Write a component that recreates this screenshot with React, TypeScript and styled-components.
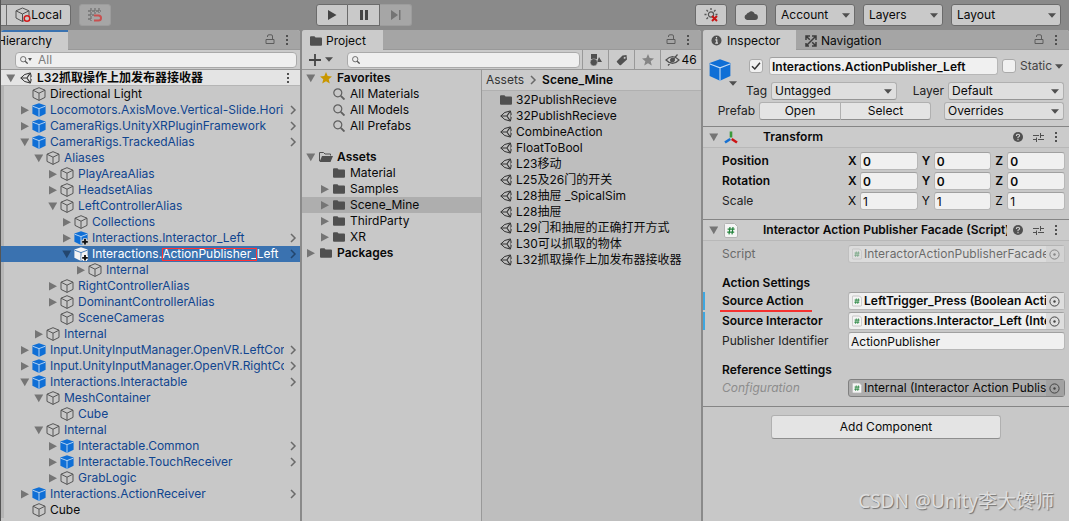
import React from "react";
import styled, { createGlobalStyle, css } from "styled-components";

const GlobalStyle = createGlobalStyle`
  *, *::before, *::after { box-sizing: border-box; }
  body { margin: 0; background: #8a8a8a; }
  body, button, input, select {
    font-family: Inter, "Noto Sans CJK SC", sans-serif;
    font-size: 12px;
    line-height: 16px;
    color: #090909;
  }
  button { padding: 0; border: 0; background: none; }
  ul { list-style: none; margin: 0; padding: 0; }
  svg { display: block; flex: none; }
`;

/* ---------- icons ---------- */

const Cube = ({ kind = "outline", size = 14, plus = false }: { kind?: string; size?: number; plus?: boolean }) => {
  const solid = kind !== "outline";
  const fill = kind === "white" ? "#f4f4f4" : "#0f6fd6";
  const seam = kind === "white" ? "#3a72b0" : "#c4dcf5";
  return (
    <svg width={size} height={size} viewBox="0 0 14 14" fill="none">
      {solid ? (
        <>
          <path d="M7 .2 13.6 2.6V10.8L7 13.9.4 10.8V2.6Z" fill={fill} />
          <path d="M.6 3.2 7 5.6 13.4 3.2M7 5.6V13.8" stroke={seam} strokeWidth={size > 14 ? 0.7 : 0.9} />
        </>
      ) : (
        <path d="M7 .7 13 3.2V10.4L7 13.4 1 10.4V3.2ZM1 3.2 7 6.2 13 3.2M7 6.2V13.4" stroke="#555" strokeWidth="1" strokeLinejoin="round" />
      )}
      {plus && (
        <>
          <path d="M11 7.2V14M7.4 10.7H14" stroke={kind === "white" ? "#f4f4f4" : "#c8c8c8"} strokeWidth="4" />
          <path d="M11 8V13.6M8.2 10.8H13.8" stroke="#111" strokeWidth="1.8" />
        </>
      )}
    </svg>
  );
};

const Triangle = ({ open, color = "#757575" }: { open?: boolean; color?: string }) => (
  <svg width="10" height="10" viewBox="0 0 10 10" fill={color}>
    <path d={open ? "M.3 1.5H9.2L4.8 9.2Z" : "M1 1 9 5.2 1 9.4Z"} />
  </svg>
);

const Caret = () => (
  <svg width="8" height="5" viewBox="0 0 8 5" fill="#4f4f4f">
    <path d="M0 .3H8L4 4.7Z" />
  </svg>
);

const Kebab = () => (
  <svg width="4" height="12" viewBox="0 0 4 12" fill="#505050">
    <path d="M1 1h2v2H1zM1 5h2v2H1zM1 9h2v2H1z" />
  </svg>
);

const Lock = () => (
  <svg width="10" height="11" viewBox="0 0 10 11" fill="none" stroke="#5c5c5c">
    <path d="M1 5.5H9V9.5H1ZM2.5 3V2Q2.5 .8 4 .8H6Q7.5 .8 7.5 2V5.5" />
  </svg>
);

const Chevron = ({ color = "#6a6a6a" }: { color?: string }) => (
  <svg width="8" height="10" viewBox="0 0 8 10" fill="none" stroke={color} strokeWidth="1.5">
    <path d="M2 1 6 5 2 9" />
  </svg>
);

const Magnifier = ({ size = 8, color = "#4f4f4f" }: { size?: number; color?: string }) => (
  <svg width={size} height={size} viewBox="0 0 12 12" fill="none" stroke={color}>
    <circle cx="4.8" cy="4.8" r="4" strokeWidth="1.2" />
    <path d="M7.8 7.8 11.5 11.5" strokeWidth="1.9" />
  </svg>
);

const Folder = ({ open }: { open?: boolean }) =>
  open ? (
    <svg width="14" height="12" viewBox="0 0 14 12" fill="#505050">
      <path d="M.5 10V1.5H4.5L6 3H11.5V4.5" fill="none" stroke="#505050" />
      <path d="M3 5H14L11.5 11H.5Z" />
    </svg>
  ) : (
    <svg width="12" height="12" viewBox="0 0 12 12" fill="#505050">
      <path d="M0 2.2Q0 1.2 1 1.2H4.4L5.6 2.6H11Q12 2.6 12 3.6V9.8Q12 10.8 11 10.8H1Q0 10.8 0 9.8Z" />
    </svg>
  );

const UnityMark = () => (
  <svg width="12" height="12" viewBox="0 0 12 12" fill="none" stroke="#333" strokeWidth="1">
    <path d="M4.6 2.6.8 6 4.6 9.4M4.4 2.6 10.4.9 11.3 4.8M11.3 7.2 10.4 11.1 4.4 9.4" />
    <path d="M.8 6H6.9L9.9 1.6M6.9 6 9.9 10.4" strokeWidth="1.1" />
    <path d="M10.6 3.6V8.4" stroke="#666" strokeWidth=".8" />
  </svg>
);

const Star = ({ color, size = 12 }: { color: string; size?: number }) => (
  <svg width={size} height={size} viewBox="0 0 12 12" fill={color}>
    <path d="M6 0 7.7 4.1 12 4.5 8.7 7.3 9.8 11.6 6 9.3 2.2 11.6 3.3 7.3 0 4.5 4.3 4.1Z" />
  </svg>
);

const Help = () => (
  <svg width="10" height="10" viewBox="0 0 10 10" fill="none">
    <circle cx="5" cy="5" r="5" fill="#505050" />
    <path d="M3.4 3.9Q3.4 2.3 5 2.3T6.6 3.8Q6.6 4.6 5 5.3V6.2M5 7V8.2" stroke="#d0d0d0" strokeWidth="1.1" />
  </svg>
);

const Sliders = () => (
  <svg width="11" height="11" viewBox="0 0 11 11" fill="none" stroke="#505050">
    <path d="M0 3.5H6M8 3.5H11M7.5 1V6M0 7.5H3M5 7.5H11M3.5 5.5V10" />
  </svg>
);

const ScriptMark = ({ big }: { big?: boolean }) => (
  <svg width={big ? 14 : 10} height={big ? 15 : 12} viewBox="0 0 14 15" fill="none">
    <path d="M1.5.5H10.5L13.5 3.5V13Q13.5 14.5 12 14.5H2Q.5 14.5 .5 13V1.5Q.5.5 1.5.5Z" fill="#f5f5f5" stroke="#b4b4b4" />
    <path d="M6 4 5 11.4M9 4 8 11.4M3.6 6.2H10.6M3.2 9.2H10.2" stroke="#21823a" strokeWidth="1.2" />
  </svg>
);

const Picker = () => (
  <svg width="11" height="11" viewBox="0 0 11 11" fill="none">
    <circle cx="5.5" cy="5.5" r="4.6" stroke="#444" />
    <circle cx="5.5" cy="5.5" r="1.2" fill="#444" />
  </svg>
);

const Axes = () => (
  <svg width="14" height="13" viewBox="0 0 14 13" fill="none" strokeWidth="2.6">
    <path d="M7 .5V6.6" stroke="#3b9a3b" />
    <path d="M1 11.5 6.3 8" stroke="#1670d2" />
    <path d="M7.7 8 13 11.5" stroke="#cc1414" />
  </svg>
);

/* ---------- shared parts ---------- */

const Editor = styled.div`
  min-height: 100vh;
  display: flex;
  flex-direction: column;
  border-left: 1px solid #555;
  position: relative;
  overflow: hidden;
`;

const Toolbar = styled.header`
  height: 30px;
  display: flex;
  align-items: center;
  padding-right: 8px;
`;

const ToolGroup = styled.div<{ $gap?: number; $basis?: string; $end?: boolean }>`
  display: flex;
  gap: ${(p) => p.$gap ?? 0}px;
  flex: ${(p) => (p.$end ? "1" : `0 0 ${p.$basis ?? "auto"}`)};
  justify-content: ${(p) => (p.$end ? "flex-end" : "flex-start")};
`;

const ToolButton = styled.button<{ $w: number; $off?: boolean; $side?: "left" | "right" | "mid" }>`
  width: ${(p) => p.$w}px;
  height: 22px;
  display: flex;
  align-items: center;
  justify-content: center;
  background: ${(p) => (p.$off ? "#a6a6a6" : "#c9c9c9")};
  border: 1px solid ${(p) => (p.$off ? "#9c9c9c" : "#6b6b6b")};
  border-radius: ${(p) => (p.$side === "left" ? "3px 0 0 3px" : p.$side === "right" ? "0 3px 3px 0" : p.$side === "mid" ? "0" : "3px")};
  ${(p) => (p.$side === "right" || p.$side === "mid") && "border-left-width: 0;"}
`;

const SelectBox = styled.span<{ $w?: number; $tool?: boolean }>`
  position: relative;
  display: flex;
  align-items: center;
  flex: ${(p) => (p.$w ? `0 0 ${p.$w}px` : "1")};
  min-width: 0;
  height: ${(p) => (p.$tool ? 22 : 18)}px;
  select {
    appearance: none;
    width: 100%;
    height: 100%;
    margin: 0;
    padding: 0 16px 0 ${(p) => (p.$tool ? 5 : 3)}px;
    background: ${(p) => (p.$tool ? "#c9c9c9" : "#dfdfdf")};
    border: 1px solid ${(p) => (p.$tool ? "#6b6b6b" : "#b0b0b0")};
    border-bottom-color: ${(p) => (p.$tool ? "#6b6b6b" : "#969696")};
    border-radius: 3px;
  }
  svg { position: absolute; right: 5px; pointer-events: none; }
`;

const Dropdown = ({ value, w, tool, label }: { value: string; w?: number; tool?: boolean; label: string }) => (
  <SelectBox $w={w} $tool={tool}>
    <select aria-label={label} defaultValue={value}>
      <option>{value}</option>
    </select>
    <Caret />
  </SelectBox>
);

const Panels = styled.main`
  flex: 1;
  display: grid;
  grid-template-columns: minmax(0, 299fr) minmax(0, 399fr) minmax(0, 366fr);
  column-gap: 2px;
`;

const Panel = styled.section`
  background: #c8c8c8;
  border-radius: 3px 3px 0 0;
  display: flex;
  flex-direction: column;
  overflow: hidden;
`;

const TabBar = styled.div`
  height: 20px;
  display: flex;
  align-items: stretch;
  background: #a5a5a5;
`;

const Tab = styled.button<{ $active?: boolean; $focus?: boolean; $w: number; $pad: number }>`
  width: ${(p) => p.$w}px;
  display: flex;
  align-items: center;
  gap: 4px;
  padding-left: ${(p) => p.$pad}px;
  background: ${(p) => (p.$active ? "#cbcbcb" : "transparent")};
  border-top: 2px solid ${(p) => (p.$focus ? "#3a72b0" : "transparent")};
  border-bottom: 1px solid ${(p) => (p.$active ? "#cbcbcb" : "#999")};
`;

const TabTools = styled.div`
  flex: 1;
  display: flex;
  align-items: center;
  justify-content: flex-end;
  gap: 10px;
  padding-right: 11px;
  border-bottom: 1px solid #999;
`;

const ClippedLabel = styled.span`
  text-indent: -4px;
`;

const PanelBar = styled.div`
  height: 20px;
  display: flex;
  align-items: center;
  background: #cbcbcb;
  border-bottom: 1px solid #999;
`;

const SearchBox = styled.label`
  flex: 1;
  height: 16px;
  display: flex;
  align-items: center;
  min-width: 0;
  padding-left: 4px;
  background: #efefef;
  border: 1px solid #aaa;
  border-radius: 4px;
  input {
    flex: 1;
    min-width: 0;
    height: 14px;
    padding: 0;
    border: 0;
    background: none;
    &::placeholder { color: #7d7d7d; opacity: 1; }
  }
`;

/* ---------- trees ---------- */

const TreeRow = styled.li<{ $depth: number; $base: number; $selected?: string; $strip?: boolean }>`
  height: 16px;
  display: flex;
  align-items: center;
  padding-left: ${(p) => p.$base + p.$depth * 14}px;
  background: ${(p) => p.$selected ?? "transparent"};
  ${(p) =>
    p.$strip &&
    css`
      box-shadow: inset 3px 0 #b5b5b5;
    `}
`;

const Fold = styled.button`
  flex: 0 0 14px;
  height: 16px;
  display: flex;
  align-items: center;
  padding-left: 2px;
`;

const Glyph = styled.span<{ $w?: number }>`
  flex: 0 0 ${(p) => p.$w ?? 14}px;
  display: flex;
  align-items: center;
  justify-content: center;
  margin-right: 4px;
`;

const SceneGlyph = styled(Glyph)`
  margin-right: 3px;
`;

const Name = styled.span<{ $color?: string; $bold?: boolean }>`
  flex: 1;
  min-width: 0;
  overflow: hidden;
  white-space: nowrap;
  color: ${(p) => p.$color ?? "#090909"};
  font-weight: ${(p) => (p.$bold ? 600 : 400)};
`;

const RowEnd = styled.span`
  flex: 0 0 16px;
  display: flex;
  align-items: center;
  padding-left: 5px;
`;

const SceneRow = styled.div`
  height: 16px;
  display: flex;
  align-items: center;
  padding-left: 3px;
  background: #e4e4e4;
  border-bottom: 1px solid #b5b5b5;
`;

const SceneMenu = styled(RowEnd)`
  padding-left: 2px;
`;

const RedFrame = styled.span`
  position: relative;
  &::after {
    content: "";
    position: absolute;
    inset: 2px 0 0;
    border: 1px solid #f33;
  }
`;

type Node = { d: number; n: string; k?: string; o?: boolean; leaf?: boolean; plain?: boolean; go?: boolean; plus?: boolean; sel?: boolean };

const nodes: Node[] = [
  { d: 0, n: "Directional Light", leaf: true, plain: true },
  { d: 0, n: "Locomotors.AxisMove.Vertical-Slide.Horizontal", k: "blue", go: true },
  { d: 0, n: "CameraRigs.UnityXRPluginFramework", k: "blue", go: true },
  { d: 0, n: "CameraRigs.TrackedAlias", k: "blue", o: true, go: true },
  { d: 1, n: "Aliases", o: true },
  { d: 2, n: "PlayAreaAlias" },
  { d: 2, n: "HeadsetAlias" },
  { d: 2, n: "LeftControllerAlias", o: true },
  { d: 3, n: "Collections" },
  { d: 3, n: "Interactions.Interactor_Left", k: "blue", plus: true, go: true },
  { d: 3, n: "Interactions.|ActionPublisher_|Left", k: "white", plus: true, go: true, o: true, sel: true },
  { d: 4, n: "Internal" },
  { d: 2, n: "RightControllerAlias" },
  { d: 2, n: "DominantControllerAlias" },
  { d: 2, n: "SceneCameras", leaf: true },
  { d: 1, n: "Internal" },
  { d: 0, n: "Input.UnityInputManager.OpenVR.LeftController", k: "blue", go: true },
  { d: 0, n: "Input.UnityInputManager.OpenVR.RightController", k: "blue", go: true },
  { d: 0, n: "Interactions.Interactable", k: "blue", o: true, go: true },
  { d: 1, n: "MeshContainer", o: true },
  { d: 2, n: "Cube", leaf: true },
  { d: 1, n: "Internal", o: true },
  { d: 2, n: "Interactable.Common", k: "blue", go: true },
  { d: 2, n: "Interactable.TouchReceiver", k: "blue", go: true },
  { d: 2, n: "GrabLogic" },
  { d: 0, n: "Interactions.ActionReceiver", k: "blue", go: true },
  { d: 0, n: "Cube", leaf: true, plain: true },
];

const BarInset = styled(PanelBar)`
  padding: 0 3px 0 14px;
`;

const SmallCaret = styled.svg`
  margin-right: 6px;
`;

const HierarchyPanel = () => (
  <Panel>
    <TabBar>
      <Tab $active $focus $w={67} $pad={0}><ClippedLabel>Hierarchy</ClippedLabel></Tab>
      <TabTools><Lock /><Kebab /></TabTools>
    </TabBar>
    <BarInset>
      <SearchBox>
        <Magnifier />
        <SmallCaret width="4" height="3" viewBox="0 0 4 3"><path d="M0 0H4L2 3Z" fill="#4f4f4f" /></SmallCaret>
        <input aria-label="Search hierarchy" placeholder="All" />
      </SearchBox>
    </BarInset>
    <SceneRow>
      <Fold aria-label="Toggle scene"><Triangle open /></Fold>
      <SceneGlyph $w={16}><UnityMark /></SceneGlyph>
      <Name $bold>L32抓取操作上加发布器接收器</Name>
      <SceneMenu><Kebab /></SceneMenu>
    </SceneRow>
    <ul>
      {nodes.map((x, i) => {
        const [head, framed, tail] = x.n.split("|");
        return (
          <TreeRow key={i} $depth={x.d} $base={17} $selected={x.sel ? "#3a72b0" : undefined} $strip={!x.sel}>
            {x.leaf ? <Fold as="span" /> : (
              <Fold aria-label={"Toggle " + head}><Triangle open={x.o} color={x.sel ? "#23466e" : undefined} /></Fold>
            )}
            <Glyph><Cube kind={x.k} plus={x.plus} /></Glyph>
            <Name $color={x.sel ? "#fff" : x.plain ? undefined : "#10458f"}>
              {head}{framed && <RedFrame>{framed}</RedFrame>}{tail}
            </Name>
            <RowEnd>{x.go && <Chevron color={x.sel ? "#23466e" : undefined} />}</RowEnd>
          </TreeRow>
        );
      })}
    </ul>
  </Panel>
);

const ProjectBar = styled(PanelBar)`
  padding-left: 7px;
`;

const AddButton = styled.button`
  display: flex;
  align-items: center;
  gap: 4px;
  width: 38px;
`;

const FilterButton = styled.button<{ $w: number; $first?: boolean }>`
  width: ${(p) => p.$w}px;
  height: 19px;
  display: flex;
  align-items: center;
  justify-content: center;
  gap: 1px;
  border-left: 1px solid #999;
  margin-left: ${(p) => (p.$first ? 2 : 0)}px;
`;

const Browser = styled.div`
  flex: 1;
  display: grid;
  grid-template-columns: minmax(0, 180fr) minmax(0, 219fr);
`;

const FolderTree = styled.ul`
  border-right: 1px solid #999;
`;

const TreeGap = styled.li`
  height: 15px;
`;

const Files = styled.div`
  background: #bebebe;
`;

const Crumbs = styled.nav`
  height: 21px;
  display: flex;
  align-items: center;
  gap: 5px;
  padding-left: 4px;
  background: #cbcbcb;
  border-bottom: 1px solid #b0b0b0;
  a { color: #333; text-decoration: none; }
  a:last-child { color: #090909; font-weight: 600; }
`;

const FileList = styled.ul`
  padding: 1px 0 0 17px;
`;

const files = [
  "32PublishRecieve", "32PublishRecieve", "CombineAction", "FloatToBool", "L23移动", "L25及26门的开关",
  "L28抽屉 _SpicalSim", "L28抽屉", "L29门和抽屉的正确打开方式", "L30可以抓取的物体", "L32抓取操作上加发布器接收器",
];

const RootItem = ({ name, open, icon }: { name: string; open?: boolean; icon: React.ReactNode }) => (
  <TreeRow $depth={0} $base={2}>
    <Fold aria-label={"Toggle " + name}><Triangle open={open} /></Fold>
    <Glyph $w={15}>{icon}</Glyph>
    <Name $bold>{name}</Name>
  </TreeRow>
);

const ProjectPanel = () => (
  <Panel>
    <TabBar>
      <Tab $active $w={81} $pad={8}><Folder />Project</Tab>
      <TabTools><Lock /><Kebab /></TabTools>
    </TabBar>
    <ProjectBar>
      <AddButton aria-label="Create">
        <svg width="12" height="12" viewBox="0 0 12 12"><path d="M6 0V12M0 6H12" stroke="#444" strokeWidth="1.8" /></svg>
        <Caret />
      </AddButton>
      <SearchBox><Magnifier /><input aria-label="Search project" /></SearchBox>
      <FilterButton $w={26} $first aria-label="Filter by type">
        <svg width="12" height="12" viewBox="0 0 12 12" fill="#505050"><path d="M1 0H7V5H1ZM9 3 12 8H7Z" /><circle cx="3.8" cy="8.3" r="3.6" stroke="#cbcbcb" strokeWidth=".5" /></svg>
      </FilterButton>
      <FilterButton $w={26} aria-label="Filter by label">
        <svg width="12" height="12" viewBox="0 0 12 12" fill="#505050"><path fillRule="evenodd" d="M6.5 1.5 10.5 1 11 5.5 5 11Q4.3 11.6 3.6 11L1 8.3Q.4 7.6 1 7ZM8.3 2.9A1 1 0 1 0 9.6 4 1 1 0 0 0 8.3 2.9Z" /></svg>
      </FilterButton>
      <FilterButton $w={26} aria-label="Favorite"><Star color="#858585" /></FilterButton>
      <FilterButton $w={41} aria-label="Hidden packages">
        <svg width="15" height="12" viewBox="0 0 15 12" fill="none" stroke="#505050"><path d="M1 6Q7.5-.8 14 6 7.5 12.8 1 6ZM12.5.5 3 11.5" strokeWidth="1.2" /><circle cx="7.5" cy="6" r="2" fill="#505050" /></svg>
        <span>46</span>
      </FilterButton>
    </ProjectBar>
    <Browser>
      <FolderTree>
        <RootItem name="Favorites" open icon={<Star color="#c99700" />} />
        {["All Materials", "All Models", "All Prefabs"].map((n) => (
          <TreeRow key={n} $depth={1} $base={2}>
            <Fold as="span" /><Glyph><Magnifier size={12} color="#606060" /></Glyph><Name>{n}</Name>
          </TreeRow>
        ))}
        <TreeGap aria-hidden />
        <RootItem name="Assets" open icon={<Folder open />} />
        {["Material", "Samples", "Scene_Mine", "ThirdParty", "XR"].map((n) => (
          <TreeRow key={n} $depth={1} $base={2} $selected={n === "Scene_Mine" ? "#aeaeae" : undefined}>
            {n === "Material" ? <Fold as="span" /> : <Fold aria-label={"Toggle " + n}><Triangle /></Fold>}
            <Glyph><Folder /></Glyph><Name>{n}</Name>
          </TreeRow>
        ))}
        <RootItem name="Packages" icon={<Folder />} />
      </FolderTree>
      <Files>
        <Crumbs><a href="#assets">Assets</a><Chevron /><a href="#scene">Scene_Mine</a></Crumbs>
        <FileList>
          {files.map((f, i) => (
            <TreeRow key={i} $depth={0} $base={0}>
              <Glyph $w={13}>{i === 0 ? <Folder /> : <UnityMark />}</Glyph><Name>{f}</Name>
            </TreeRow>
          ))}
        </FileList>
      </Files>
    </Browser>
  </Panel>
);

/* ---------- inspector ---------- */

const ObjectHeader = styled.div`
  position: relative;
  padding: 7px 5px 6px 6px;
  background: #cbcbcb;
`;

const Line = styled.div<{ $h: number }>`
  height: ${(p) => p.$h}px;
  display: flex;
  align-items: center;
`;

const HeaderTop = styled(Line)`
  align-items: flex-start;
`;

const ObjectIcon = styled.button`
  flex: 0 0 40px;
  padding-top: 2px;
  svg + svg { margin-left: 20px; }
`;

const Tick = styled.input`
  appearance: none;
  flex: none;
  width: 14px;
  height: 14px;
  margin: 2px 0;
  border: 1px solid #aaa;
  border-radius: 3px;
  background: #f0f0f0;
  &:checked {
    background: #f0f0f0 url("data:image/svg+xml,%3Csvg xmlns='http://www.w3.org/2000/svg' viewBox='0 0 12 12'%3E%3Cpath d='M2 6.3 4.8 9 10 2.8' fill='none' stroke='%23333' stroke-width='1.5'/%3E%3C/svg%3E") center / 12px no-repeat;
  }
`;

const fieldLook = css`
  height: 18px;
  min-width: 0;
  border: 1px solid #b7b7b7;
  border-top-color: #a0a0a0;
  border-radius: 3px;
  background: #f0f0f0;
`;

const TextField = styled.input<{ $bold?: boolean }>`
  ${fieldLook}
  flex: 1;
  width: 0;
  padding: 0 2px;
  font-weight: ${(p) => (p.$bold ? 600 : 400)};
`;

const NameField = styled(TextField)`
  margin: 0 4px 0 6px;
`;

const StaticLabel = styled.label`
  width: 37px;
  padding: 1px 0 0 4px;
  white-space: nowrap;
  color: #444;
`;

const StaticMenu = styled.button`
  width: 11px;
  height: 18px;
  padding-left: 2px;
`;

const RightLabel = styled.span<{ $w: number }>`
  flex: 0 0 ${(p) => p.$w}px;
  padding-right: 4px;
  text-align: right;
  white-space: nowrap;
  color: #222;
`;

const PushButton = styled.button<{ $w: number; $side?: "left" | "right"; $h?: number }>`
  width: ${(p) => p.$w}px;
  height: ${(p) => p.$h ?? 18}px;
  background: #e4e4e4;
  border: 1px solid #b0b0b0;
  border-bottom-color: #8e8e8e;
  border-radius: ${(p) => (p.$side === "left" ? "3px 0 0 3px" : p.$side === "right" ? "0 3px 3px 0" : "3px")};
  ${(p) => p.$side === "right" && "border-left: 0;"}
`;

const Spacer = styled.span`
  flex: 1;
`;

const SectionHead = styled.div`
  height: 22px;
  display: flex;
  align-items: center;
  gap: 3px;
  padding: 0 11px 0 4px;
  background: #cbcbcb;
  border-top: 1px solid #858585;
  border-bottom: 1px solid #b8b8b8;
`;

const SectionIcon = styled.span`
  width: 36px;
`;

const SectionTitle = styled.h2`
  flex: 1;
  min-width: 0;
  margin: 0;
  overflow: hidden;
  white-space: nowrap;
  font-size: 12px;
  font-weight: 600;
`;

const HeadTools = styled.div`
  display: flex;
  align-items: center;
  gap: 10px;
  padding-left: 3px;
`;

const Section = ({ title, icon }: { title: string; icon: React.ReactNode }) => (
  <SectionHead>
    <Fold aria-label={"Toggle " + title}><Triangle open /></Fold>
    <SectionIcon>{icon}</SectionIcon>
    <SectionTitle>{title}</SectionTitle>
    <HeadTools><Help /><Sliders /><Kebab /></HeadTools>
  </SectionHead>
);

const Fields = styled.div`
  display: flex;
  flex-direction: column;
  gap: 2px;
  padding: 4px 0 9px;
`;

const FieldRow = styled.div<{ $over?: boolean }>`
  height: 18px;
  display: grid;
  grid-template-columns: minmax(0, 126fr) minmax(0, 217fr);
  align-items: center;
  padding: 0 4px 0 17px;
  border-left: 2px solid ${(p) => (p.$over ? "#3fa7e0" : "transparent")};
`;

const FieldLabel = styled.label<{ $bold?: boolean; $tone?: "dim" | "italic" }>`
  white-space: nowrap;
  color: ${(p) => (p.$tone === "dim" ? "#6a6a6a" : p.$tone === "italic" ? "#8c8c8c" : p.$bold ? "#090909" : "#222")};
  font-style: ${(p) => (p.$tone === "italic" ? "italic" : "normal")};
  font-weight: ${(p) => (p.$bold ? 600 : 400)};
`;

const RedUnderline = styled.span`
  position: relative;
  &::after {
    content: "";
    position: absolute;
    left: -2px;
    right: -8px;
    bottom: -4px;
    height: 2px;
    background: #f5322f;
  }
`;

const Vector = styled.div`
  display: grid;
  grid-template-columns: repeat(3, minmax(0, 1fr));
  gap: 4px;
`;

const Axis = styled.label<{ $bold?: boolean }>`
  display: flex;
  align-items: center;
  font-weight: ${(p) => (p.$bold ? 600 : 400)};
  span { width: 12px; }
`;

const ObjectField = styled.div<{ $tone?: "dim" | "dark"; $bold?: boolean }>`
  ${fieldLook}
  display: flex;
  align-items: center;
  padding-left: 3px;
  font-weight: ${(p) => (p.$bold ? 600 : 400)};
  opacity: ${(p) => (p.$tone === "dim" ? 0.5 : 1)};
  ${(p) => p.$tone === "dark" && "background: #aeaeae; border-color: #808080;"}
  input {
    flex: 1;
    width: 0;
    min-width: 0;
    height: 16px;
    padding: 0 0 0 2px;
    border: 0;
    background: none;
    font-weight: inherit;
  }
  button {
    width: 18px;
    height: 16px;
    padding-left: 3px;
    background: ${(p) => (p.$tone === "dark" ? "#a2a2a2" : "#dedede")};
  }
`;

const Reference = ({ id, value, tone, bold }: { id: string; value: string; tone?: "dim" | "dark"; bold?: boolean }) => (
  <ObjectField $tone={tone} $bold={bold}>
    <ScriptMark />
    <input id={id} readOnly value={value} />
    <button aria-label="Pick object"><Picker /></button>
  </ObjectField>
);

const GroupTitle = styled.h3`
  margin: 10px 0 0 19px;
  height: 15px;
  font-size: 12px;
  font-weight: 600;
`;

const Footer = styled.div`
  display: flex;
  justify-content: center;
  padding-top: 8px;
  border-top: 1px solid #858585;
`;

const InspectorPanel = () => (
  <Panel>
    <TabBar>
      <Tab $active $w={93} $pad={8}>
        <svg width="12" height="11" viewBox="0 0 12 11"><circle cx="5.5" cy="5.5" r="5" fill="#505050" /><path d="M5.5 2V3.6M4.3 4.8H5.8V8M4.2 8.2H7" stroke="#ddd" strokeWidth="1.2" fill="none" /></svg>
        Inspector
      </Tab>
      <Tab $w={100} $pad={9}>
        <svg width="12" height="12" viewBox="0 0 12 12" fill="none" stroke="#3c3c3c" strokeWidth="1.5"><path d="M1 5V1H5M1.5 1.5 4.8 4.8M11 7V11H7M10.5 10.5 7.2 7.2M7 1H11V5M10.5 1.5 1.5 10.5M1 8V11H4" /></svg>
        Navigation
      </Tab>
      <TabTools><Lock /><Kebab /></TabTools>
    </TabBar>
    <ObjectHeader>
      <HeaderTop $h={23}>
        <ObjectIcon aria-label="Object icon"><Cube kind="blue" size={22} /><Caret /></ObjectIcon>
        <Tick type="checkbox" defaultChecked aria-label="Active" />
        <NameField $bold aria-label="Name" defaultValue="Interactions.ActionPublisher_Left" />
        <Tick type="checkbox" id="static" />
        <StaticLabel htmlFor="static">Static</StaticLabel>
        <StaticMenu aria-label="Static options"><Caret /></StaticMenu>
      </HeaderTop>
      <Line $h={22}>
        <RightLabel $w={62}>Tag</RightLabel>
        <Dropdown label="Tag" value="Untagged" />
        <RightLabel $w={51}>Layer</RightLabel>
        <Dropdown label="Layer" value="Default" w={116} />
      </Line>
      <Line $h={18}>
        <RightLabel $w={50}>Prefab</RightLabel>
        <PushButton $w={82} $side="left">Open</PushButton>
        <PushButton $w={90} $side="right">Select</PushButton>
        <Spacer />
        <Dropdown label="Overrides" value="Overrides" w={120} />
      </Line>
    </ObjectHeader>
    <Section title="Transform" icon={<Axes />} />
    <Fields>
      {["Position", "Rotation", "Scale"].map((n) => {
        const bold = n !== "Scale";
        return (
          <FieldRow key={n}>
            <FieldLabel as="span" $bold={bold}>{n}</FieldLabel>
            <Vector>
              {["X", "Y", "Z"].map((a) => (
                <Axis key={a} $bold={bold}>
                  <span>{a}</span>
                  <TextField $bold={bold} defaultValue={bold ? "0" : "1"} />
                </Axis>
              ))}
            </Vector>
          </FieldRow>
        );
      })}
    </Fields>
    <Section title="Interactor Action Publisher Facade (Script)" icon={<ScriptMark big />} />
    <Fields>
      <FieldRow>
        <FieldLabel htmlFor="script" $tone="dim">Script</FieldLabel>
        <Reference id="script" tone="dim" value="InteractorActionPublisherFacade" />
      </FieldRow>
      <GroupTitle>Action Settings</GroupTitle>
      <FieldRow $over>
        <FieldLabel htmlFor="source-action" $bold><RedUnderline>Source Action</RedUnderline></FieldLabel>
        <Reference id="source-action" bold value="LeftTrigger_Press (Boolean Action)" />
      </FieldRow>
      <FieldRow $over>
        <FieldLabel htmlFor="source-interactor" $bold>Source Interactor</FieldLabel>
        <Reference id="source-interactor" bold value="Interactions.Interactor_Left (Interactor Facade)" />
      </FieldRow>
      <FieldRow>
        <FieldLabel htmlFor="identifier">Publisher Identifier</FieldLabel>
        <Line $h={18}><TextField id="identifier" defaultValue="ActionPublisher" /></Line>
      </FieldRow>
      <GroupTitle>Reference Settings</GroupTitle>
      <FieldRow>
        <FieldLabel htmlFor="configuration" $tone="italic">Configuration</FieldLabel>
        <Reference id="configuration" tone="dark" value="Internal (Interactor Action Publisher Configurator)" />
      </FieldRow>
    </Fields>
    <Footer><PushButton $w={230} $h={24}>Add Component</PushButton></Footer>
  </Panel>
);

const Watermark = styled.div`
  position: absolute;
  right: 15px;
  bottom: 8px;
  font: 19px/24px "Noto Sans", "Noto Sans CJK SC", sans-serif;
  color: #dedede;
  text-shadow: 1px 1px 1px #707070;
  pointer-events: none;
`;

const SnapButton = styled(ToolButton)`
  margin-left: 8px;
`;

export default function App() {
  return (
    <Editor>
      <GlobalStyle />
      <Toolbar>
        <ToolGroup $basis="315px">
          <ToolButton $w={6} $side="mid" aria-label="Pivot" />
          <ToolButton $w={64} $side="right">
            <svg width="16" height="16" viewBox="0 0 16 16" fill="none" stroke="#505050"><path d="M7.5 1 14 3.8V11L7.5 14.5 1 11V3.8ZM1 3.8 7.5 7 14 3.8M7.5 7V14.5" /><circle cx="12" cy="11.5" r="2.8" fill="#c9c9c9" stroke="#d41a1a" strokeWidth="1.5" /></svg>
            Local
          </ToolButton>
          <SnapButton $w={32} $off aria-label="Grid snapping">
            <svg width="16" height="16" viewBox="0 0 16 16" fill="none" stroke="#737373" strokeWidth="1.3"><path d="M4 1V14M8 1V7M12 1V6M1 4H14M1 8H7M1 12H5" strokeDasharray="3 1" /><path d="M7 8.5H11.5Q14 8.5 14 11T11.5 13.5H7" stroke="#c85050" strokeWidth="2" /></svg>
          </SnapButton>
        </ToolGroup>
        <ToolGroup>
          <ToolButton $w={32} $side="left" aria-label="Play"><svg width="10" height="10" viewBox="0 0 10 10"><path d="M1 0 9.5 5 1 10Z" fill="#444" /></svg></ToolButton>
          <ToolButton $w={32} $side="mid" aria-label="Pause"><svg width="10" height="10" viewBox="0 0 10 10"><path d="M1 0H4V10H1ZM6 0H9V10H6Z" fill="#444" /></svg></ToolButton>
          <ToolButton $w={32} $side="right" $off aria-label="Step"><svg width="11" height="10" viewBox="0 0 11 10"><path d="M1 0 8 5 1 10ZM9 0H10.5V10H9Z" fill="#747474" /></svg></ToolButton>
        </ToolGroup>
        <ToolGroup $gap={8} $end>
          <ToolButton $w={32} aria-label="Services">
            <svg width="15" height="14" viewBox="0 0 15 14" fill="none"><circle cx="7" cy="6.5" r="2.6" stroke="#555" strokeWidth="1.2" /><path d="M7 0V2M2.5 2 4 3.5M11.5 2 10 3.5M.5 6.5H2.5M11.5 6.5H13.5M2.5 11 4 9.5" stroke="#555" strokeWidth="1.3" /><path d="M8 8 13 13M13 8 8 13" stroke="#c81616" strokeWidth="2" /></svg>
          </ToolButton>
          <ToolButton $w={32} aria-label="Cloud">
            <svg width="14" height="10" viewBox="0 0 14 10" fill="#505050"><path d="M3 10A3 3 0 0 1 2.6 4.2 3 3 0 0 1 5 2.4 3.4 3.4 0 0 1 10.8 4 3 3 0 0 1 11 10Z" /></svg>
          </ToolButton>
          <Dropdown tool label="Account" value="Account" w={80} />
          <Dropdown tool label="Layers" value="Layers" w={80} />
          <Dropdown tool label="Layout" value="Layout" w={110} />
        </ToolGroup>
      </Toolbar>
      <Panels>
        <HierarchyPanel />
        <ProjectPanel />
        <InspectorPanel />
      </Panels>
      <Watermark>CSDN @Unity李大馋师</Watermark>
    </Editor>
  );
}
